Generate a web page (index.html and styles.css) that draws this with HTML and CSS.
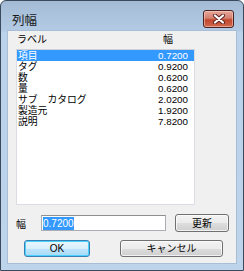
FILE: index.html
```html
<!DOCTYPE html>
<html lang="ja">
<head>
    <meta charset="UTF-8">
    <title>列幅</title>
    <link rel="stylesheet" href="styles.css">
</head>
<body>
    <div class="window">
        <div class="titlebar">
            <span class="title">列幅</span>
            <div class="close-btn">
                <svg width="14" height="10" viewBox="0 0 14 10">
                    <path d="M3 1.5 L11 8.5 M11 1.5 L3 8.5" stroke="#5a2020" stroke-width="4" stroke-linecap="round"/>
                    <path d="M3 1.5 L11 8.5 M11 1.5 L3 8.5" stroke="#ffffff" stroke-width="2.2" stroke-linecap="round"/>
                </svg>
            </div>
        </div>

        <div class="client">
            <div class="list-header">
                <span>ラベル</span>
                <span class="col-width">幅</span>
            </div>

            <div class="list">
                <div class="row selected"><span>項目</span><span>0.7200</span></div>
                <div class="row"><span>タグ</span><span>0.9200</span></div>
                <div class="row"><span>数</span><span>0.6200</span></div>
                <div class="row"><span>量</span><span>0.6200</span></div>
                <div class="row"><span>サブ　カタログ</span><span>2.0200</span></div>
                <div class="row"><span>製造元</span><span>1.9200</span></div>
                <div class="row"><span>説明</span><span>7.8200</span></div>
            </div>

            <div class="edit-row">
                <span class="edit-label">幅</span>
                <div class="text-input"><span class="sel">0.7200</span></div>
                <button class="btn btn-update">更新</button>
            </div>

            <div class="button-row">
                <button class="btn btn-default">OK</button>
                <button class="btn btn-cancel">キャンセル</button>
            </div>
        </div>
    </div>
</body>
</html>
```

FILE: styles.css
```css
* {
    margin: 0;
    padding: 0;
    box-sizing: border-box;
}

body {
    width: 244px;
    height: 271px;
    overflow: hidden;
    font-family: "Liberation Sans", "Noto Sans CJK JP", sans-serif;
    font-size: 11px;
    color: #000;
    background: #fff;
}

.window {
    width: 244px;
    height: 271px;
    border: 1px solid #3a4a5c;
    border-radius: 6px 6px 0 0;
    background: linear-gradient(to bottom, #a3bbd5 0px, #b3cbe4 30px, #bad2ea 31px, #bdd4eb 100%);
    padding: 0 6px 6px 6px;
    display: flex;
    flex-direction: column;
}

.titlebar {
    height: 29px;
    display: flex;
    align-items: center;
    justify-content: space-between;
    padding: 0 3px 0 5px;
}

.title {
    font-family: "Noto Sans CJK JP", sans-serif;
    font-size: 12.5px;
    color: #1a1a1a;
    margin-top: 7px;
}

.close-btn {
    width: 31px;
    height: 18px;
    margin-top: 6px;
    border: 1px solid #4a2222;
    border-radius: 3px;
    background: linear-gradient(to bottom, #e6a699 0%, #d3806f 45%, #c2462d 55%, #cf6a4e 100%);
    box-shadow: inset 0 0 0 1px rgba(255, 220, 210, 0.5);
    display: flex;
    align-items: center;
    justify-content: center;
}

.client {
    flex: 1;
    background: #f0f0f0;
    border: 1px solid #a8bdd6;
    padding: 0 7px 0 8px;
    display: flex;
    flex-direction: column;
}

.list-header {
    height: 18px;
    line-height: 18px;
    position: relative;
    padding-left: 1px;
    font-size: 10px;
}

.col-width {
    position: absolute;
    left: 147px;
}

.list {
    width: 179px;
    height: 156px;
    background: #fff;
    border: 1px solid #dcdce4;
    border-top-color: #cfcfd8;
}

.row {
    height: 11px;
    line-height: 11px;
    font-size: 9.8px;
    display: flex;
    justify-content: space-between;
    padding: 0 6px 0 1px;
}

.row.selected {
    background: #3399ff;
    color: #fff;
}

.edit-row {
    display: flex;
    align-items: center;
    margin-top: 9px;
    height: 18px;
    font-size: 10px;
}

.edit-label {
    width: 25px;
}

.text-input {
    width: 125px;
    height: 16px;
    background: #fff;
    border: 1px solid #abadb3;
    border-top-color: #8e8f8f;
    padding-left: 1px;
    line-height: 14px;
}

.sel {
    background: #3399ff;
    color: #fff;
    display: inline-block;
    height: 13px;
    line-height: 13px;
    margin-top: 1px;
}

.btn {
    font-family: "Liberation Sans", "Noto Sans CJK JP", sans-serif;
    font-size: 10px;
    color: #000;
    border: 1px solid #707070;
    border-radius: 3px;
    background: linear-gradient(to bottom, #f2f2f2 0%, #ebebeb 50%, #dddddd 51%, #cfcfcf 100%);
    box-shadow: inset 0 0 0 1px rgba(255, 255, 255, 0.7);
    line-height: 15px;
}

.btn-update {
    width: 54px;
    height: 18px;
    margin-left: 9px;
}

.button-row {
    display: flex;
    margin-top: 8px;
    padding-left: 8px;
}

.btn-default {
    width: 66px;
    height: 17px;
    border-color: #3c7fb1;
    background: linear-gradient(to bottom, #eaf6fd 0%, #d9f0fc 50%, #bee6fd 51%, #a7d9f5 100%);
    box-shadow: inset 0 0 0 1px #48d2ff;
}

.btn-cancel {
    width: 103px;
    height: 17px;
    margin-left: 30px;
}
```
